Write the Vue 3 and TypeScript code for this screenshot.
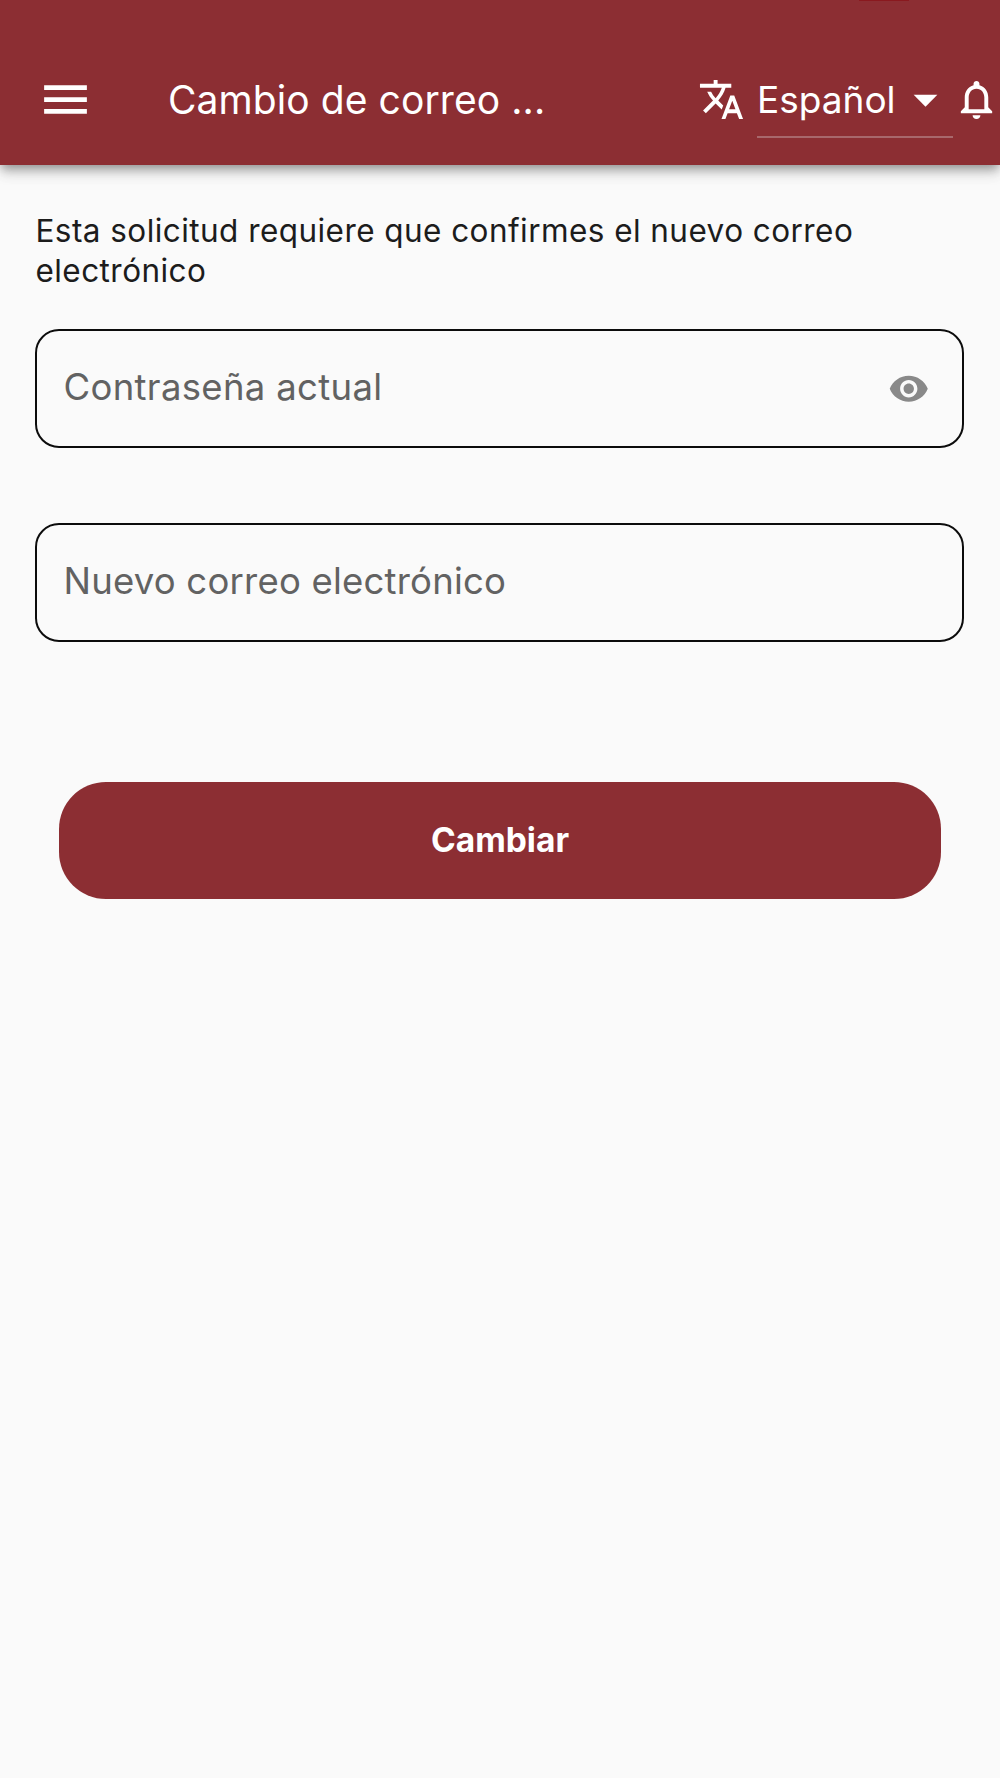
<script setup lang="ts">
interface Field {
  id: string
  label: string
  secret: boolean
}

const title = 'Cambio de correo ...'
const language = 'Español'
const fields: Field[] = [
  { id: 'password', label: 'Contraseña actual', secret: true },
  { id: 'email', label: 'Nuevo correo electrónico', secret: false },
]
</script>

<template>
  <div class="screen">
    <header class="app-bar">
      <svg class="menu" viewBox="0 0 24 24"><path d="M3 18h18v-2H3v2zm0-5h18v-2H3v2zm0-7v2h18V6H3z" /></svg>
      <h1 class="title">{{ title }}</h1>
      <svg class="translate" viewBox="0 0 24 24">
        <path d="M12.87 15.07l-2.54-2.51.03-.03c1.74-1.94 2.98-4.17 3.71-6.53H17V4h-7V2H8v2H1v1.99h11.17C11.5 7.92 10.44 9.75 9 11.35 8.07 10.32 7.3 9.19 6.69 8h-2c.73 1.63 1.73 3.17 2.98 4.56l-5.09 5.02L4 19l5-5 3.11 3.11.76-2.04zM18.5 10h-2L12 22h2l1.12-3h4.75L21 22h2l-4.5-12zm-2.62 7l1.62-4.33L19.12 17h-3.24z" />
      </svg>
      <div class="language">
        <span class="language-name">{{ language }}</span>
        <svg class="arrow" viewBox="0 0 24 24"><path d="M7 10l5 5 5-5z" /></svg>
      </div>
      <svg class="bell" viewBox="0 0 24 24">
        <path d="M12 22c1.1 0 2-.9 2-2h-4c0 1.1.9 2 2 2zm6-6v-5c0-3.07-1.63-5.64-4.5-6.32V4c0-.83-.67-1.5-1.5-1.5s-1.5.67-1.5 1.5v.68C7.64 5.36 6 7.92 6 11v5l-2 2v1h16v-1l-2-2zm-2 1H8v-6c0-2.48 1.51-4.5 4-4.5s4 2.02 4 4.5v6z" />
      </svg>
      <i class="status-mark"></i>
    </header>

    <main class="content">
      <p class="notice">Esta solicitud requiere que confirmes el nuevo correo electrónico</p>
      <div v-for="field in fields" :key="field.id" class="field">
        <span class="label" :class="field.id">{{ field.label }}</span>
        <svg v-if="field.secret" class="eye" viewBox="0 0 24 24">
          <path d="M12 4.5C7 4.5 2.73 7.61 1 12c1.73 4.39 6 7.5 11 7.5s9.27-3.11 11-7.5c-1.73-4.39-6-7.5-11-7.5zM12 17c-2.76 0-5-2.24-5-5s2.24-5 5-5 5 2.24 5 5-2.24 5-5 5zm0-8c-1.66 0-3 1.34-3 3s1.34 3 3 3 3-1.34 3-3-1.34-3-3-3z" />
        </svg>
      </div>
      <button class="submit" type="button"><span>Cambiar</span></button>
    </main>
  </div>
</template>

<style>
body {
  margin: 0;
  background: #fafafa;
}
</style>

<style scoped>
.screen {
  width: 1000px;
  height: 1778px;
  background: #fafafa;
  font-family: Inter, "Liberation Sans", sans-serif;
  overflow: hidden;
}

svg {
  display: block;
  flex: none;
  fill: #fff;
}

.app-bar {
  position: relative;
  box-sizing: border-box;
  display: flex;
  align-items: center;
  height: 165px;
  padding: 34px 0 0 37px;
  background: #8c2e33;
  color: #fff;
  box-shadow: 0 5px 9px -2px rgba(0, 0, 0, 0.3), 0 9px 12px rgba(0, 0, 0, 0.12), 0 2px 20px rgba(0, 0, 0, 0.08);
}

.menu {
  width: 57px;
  height: 57px;
}

.title {
  width: 531px;
  margin: 0 0 0 74px;
  padding-top: 1px;
  font-size: 39px;
  font-weight: 400;
  line-height: 48px;
  letter-spacing: 0.08px;
  white-space: nowrap;
}

.translate {
  width: 47px;
  height: 47px;
  margin-left: -1px;
}

.language {
  box-sizing: border-box;
  display: flex;
  align-items: center;
  justify-content: space-between;
  width: 196px;
  height: 77px;
  margin-left: 12px;
  border-bottom: 2px solid #a8686c;
  padding-top: 2px;
}

.language-name {
  font-size: 37px;
  line-height: 48px;
  letter-spacing: 0;
}

.arrow {
  width: 57px;
  height: 57px;
  margin-right: -1px;
}

.bell {
  width: 47px;
  height: 47px;
}

.status-mark {
  position: absolute;
  top: 0;
  left: 859px;
  width: 50px;
  height: 1px;
  background: #8a191f;
}

.content {
  display: flex;
  flex-direction: column;
  padding: 46px 36px 0 35px;
}

.notice {
  margin: 0 0 38px;
  padding-left: 0.5px;
  color: #1c1c1c;
  font-size: 31.5px;
  line-height: 40px;
  letter-spacing: 0.44px;
}

.field {
  box-sizing: border-box;
  display: flex;
  align-items: center;
  justify-content: space-between;
  height: 118.5px;
  margin-bottom: 75.5px;
  padding: 0 33px 0 26.5px;
  border: 2px solid #0c0c0c;
  border-radius: 24px;
}

.label {
  padding-bottom: 2.5px;
  color: #626262;
  font-size: 36.5px;
  line-height: 46px;
  white-space: nowrap;
}

.password {
  letter-spacing: 0.33px;
}

.email {
  letter-spacing: 0.21px;
}

.eye {
  width: 41.5px;
  height: 41.5px;
  fill: #898989;
}

.submit {
  height: 117px;
  margin: 65px 23px 0 24px;
  padding: 0 0 2px;
  border: 0;
  border-radius: 47px;
  background: #8c2e33;
  color: #fff;
  font: 700 33.5px/40px Inter, "Liberation Sans", sans-serif;
}
</style>
